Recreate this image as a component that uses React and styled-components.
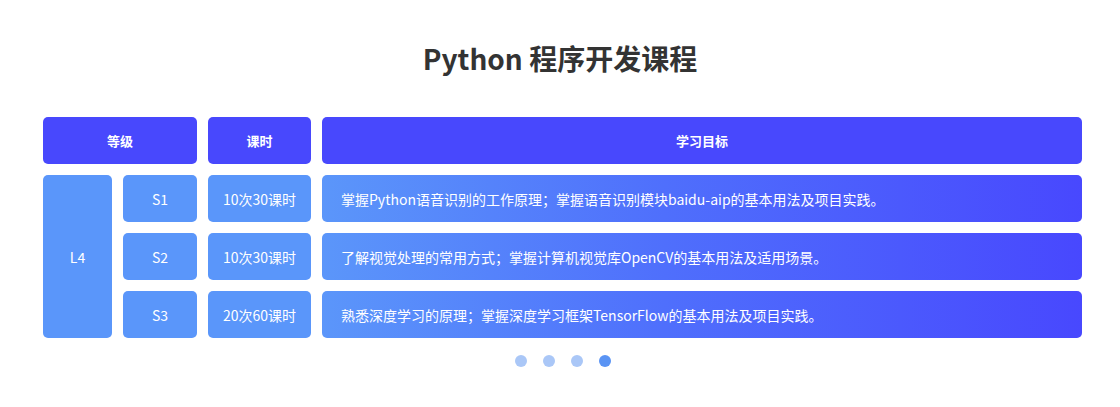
import { Fragment } from 'react'
import styled, { createGlobalStyle } from 'styled-components'

const GlobalStyle = createGlobalStyle`
  body {
    margin: 0;
    background: #fff;
    font-family: "Noto Sans CJK SC", "Noto Sans", sans-serif;
  }
`

const Page = styled.div`
  width: 1120px;
  height: 407px;
  padding-top: 38px;
  box-sizing: border-box;
`

const Title = styled.h2`
  margin: 0;
  height: 40px;
  line-height: 40px;
  text-align: center;
  font-size: 28px;
  font-weight: 700;
  color: #333;
`

const Table = styled.div`
  margin: 39px 0 0 43px;
  display: grid;
  grid-template-columns: 69px 74px 103px 760px;
  grid-auto-rows: 47px;
  gap: 11px;
`

const Cell = styled.div`
  display: flex;
  align-items: center;
  justify-content: ${(p) => (p.$left ? 'flex-start' : 'center')};
  padding: ${(p) => (p.$left ? '0 0 0 19px' : '0')};
  border-radius: 5px;
  color: #fff;
  font-size: 14px;
  background: #5a96fa;
  grid-column: ${(p) => p.$col || 'auto'};
  grid-row: ${(p) => p.$row || 'auto'};
`

const HeadCell = styled(Cell)`
  background: #4848fd;
  font-size: 13px;
  font-weight: 700;
`

const Goal = styled(Cell)`
  background: linear-gradient(90deg, #5b96fa 0%, #4f6ffc 45%, #4848fe 100%);
`

const Dots = styled.div`
  display: flex;
  justify-content: center;
  gap: 16px;
  margin: 17px 0 0 6px;
`

const Dot = styled.span`
  width: 12px;
  height: 12px;
  border-radius: 50%;
  background: ${(p) => (p.$active ? '#5a94f4' : '#aac7f7')};
`

const rows = [
  { sub: 'S1', hours: '10次30课时', goal: '掌握Python语音识别的工作原理；掌握语音识别模块baidu-aip的基本用法及项目实践。' },
  { sub: 'S2', hours: '10次30课时', goal: '了解视觉处理的常用方式；掌握计算机视觉库OpenCV的基本用法及适用场景。' },
  { sub: 'S3', hours: '20次60课时', goal: '熟悉深度学习的原理；掌握深度学习框架TensorFlow的基本用法及项目实践。' },
]

export default function App() {
  return (
    <Page>
      <GlobalStyle />
      <Title>Python 程序开发课程</Title>
      <Table>
        <HeadCell $col="1 / 3">等级</HeadCell>
        <HeadCell>课时</HeadCell>
        <HeadCell>学习目标</HeadCell>
        <Cell $col="1" $row="2 / 5">L4</Cell>
        {rows.map((r) => (
          <Fragment key={r.sub}>
            <Cell $col="2">{r.sub}</Cell>
            <Cell $col="3">{r.hours}</Cell>
            <Goal $col="4" $left>{r.goal}</Goal>
          </Fragment>
        ))}
      </Table>
      <Dots>
        {[0, 1, 2, 3].map((i) => (
          <Dot key={i} $active={i === 3} />
        ))}
      </Dots>
    </Page>
  )
}
